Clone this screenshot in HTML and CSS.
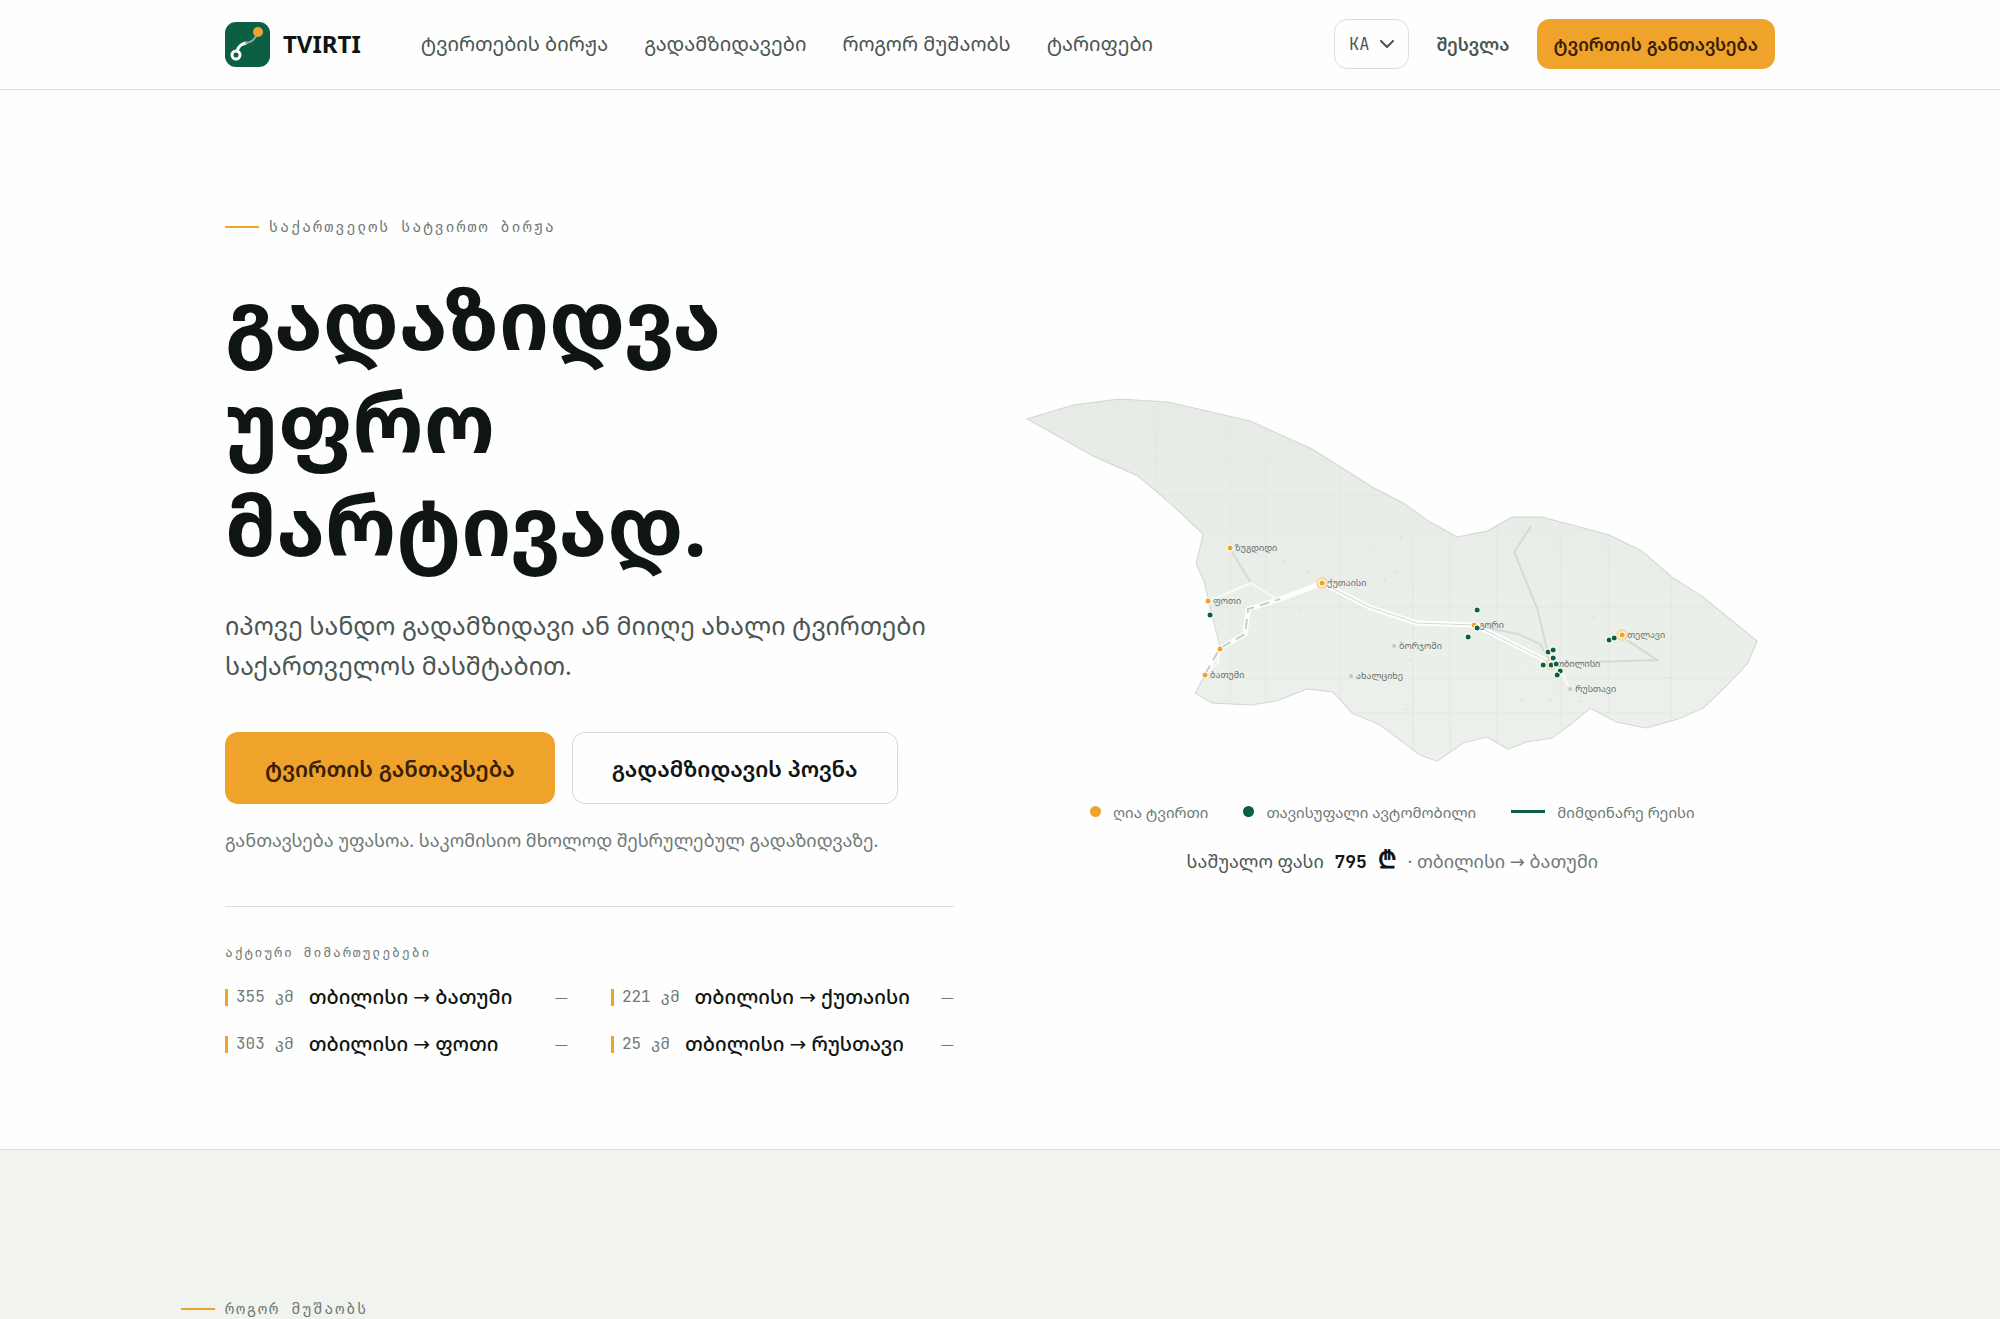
FILE: index.html
```html
<!DOCTYPE html>
<html lang="ka">
<head>
<meta charset="utf-8">
<meta name="viewport" content="width=device-width, initial-scale=1">
<title>TVIRTI</title>
<link rel="stylesheet" href="styles.css">
</head>
<body>
<header class="site-header">
  <div class="container header-row">
    <a class="brand" href="#">
      <svg class="brand-mark" viewBox="0 0 45 45" aria-hidden="true">
        <rect width="45" height="45" rx="11" fill="#0b5f43"/>
        <path d="M12 29C14 23 17 22 21 21" fill="none" stroke="#fff" stroke-width="3" stroke-linecap="round"/>
        <path d="M20 21C27 21 30 17 32 12" fill="none" stroke="#86ad9e" stroke-width="2"/>
        <circle cx="11" cy="33" r="4" fill="none" stroke="#fff" stroke-width="3"/>
        <circle cx="33" cy="10" r="5" fill="#efa32b"/>
      </svg>
      <span>TVIRTI</span>
    </a>
    <nav class="main-nav">
      <a href="#">ტვირთების ბირჟა</a>
      <a href="#">გადამზიდავები</a>
      <a href="#">როგორ მუშაობს</a>
      <a href="#">ტარიფები</a>
    </nav>
    <div class="header-actions">
      <button class="lang" type="button">KA
        <svg width="14" height="8" viewBox="0 0 14 8" aria-hidden="true"><path d="M1 1l6 6 6-6" fill="none" stroke="currentColor" stroke-width="2" stroke-linecap="round" stroke-linejoin="round"/></svg>
      </button>
      <a class="login" href="#">შესვლა</a>
      <button class="btn btn-primary btn-small" type="button">ტვირთის განთავსება</button>
    </div>
  </div>
</header>

<main>
  <section class="hero">
    <div class="container hero-grid">
      <div class="hero-copy">
        <p class="eyebrow">საქართველოს სატვირთო ბირჟა</p>
        <h1>გადაზიდვა<br>უფრო<br>მარტივად.</h1>
        <p class="lead">იპოვე სანდო გადამზიდავი ან მიიღე ახალი ტვირთები საქართველოს მასშტაბით.</p>
        <div class="cta">
          <button class="btn btn-primary" type="button">ტვირთის განთავსება</button>
          <button class="btn btn-outline" type="button">გადამზიდავის პოვნა</button>
        </div>
        <p class="note">განთავსება უფასოა. საკომისიო მხოლოდ შესრულებულ გადაზიდვაზე.</p>
        <div class="routes">
          <h2>აქტიური მიმართულებები</h2>
          <ul>
            <li><span class="km">355 კმ</span><a href="#">თბილისი → ბათუმი</a><span class="dash">—</span></li>
            <li><span class="km">221 კმ</span><a href="#">თბილისი → ქუთაისი</a><span class="dash">—</span></li>
            <li><span class="km">303 კმ</span><a href="#">თბილისი → ფოთი</a><span class="dash">—</span></li>
            <li><span class="km">25 კმ</span><a href="#">თბილისი → რუსთავი</a><span class="dash">—</span></li>
          </ul>
        </div>
      </div>

      <div class="hero-map">
        <svg class="map" viewBox="0 0 765 380" role="img" aria-label="საქართველო">
          <defs>
            <clipPath id="land"><path d="M17 29L63 15 109 9 158 12 240 31 302 59 362 97 393 113 420 132 447 147 477 141 502 127 532 127 599 145 632 161 662 187 693 207 747 251 737 274 715 297 693 318 668 329 636 338 606 332 580 318 561 334 542 348 516 352 498 359 477 347 453 353 427 371 410 365 370 335 342 323 323 302 297 299 266 311 241 315 202 313 185 303 210 257 200 217 194 191 186 174 193 144 160 113 128 86 83 66Z"/></clipPath>
            <linearGradient id="fade" x1="0" y1="0" x2="0" y2="1"><stop offset="0" stop-color="#e6ebe6"/><stop offset="1" stop-color="#ecf1ec"/></linearGradient>
          </defs>
          <g clip-path="url(#land)">
            <rect width="765" height="380" fill="url(#fade)"/>
            <path class="grid" d="M147 0V380M220 0V380M256 0V380M330 0V380M403 0V380M440 0V380M487 0V380M550 0V380M598 0V380M661 0V380M0 70H765M0 105H765M0 141H765M0 217H765M0 288H765M0 323H765"/>
          </g>
          <path class="border" d="M17 29L63 15 109 9 158 12 240 31 302 59 362 97 393 113 420 132 447 147 477 141 502 127 532 127 599 145 632 161 662 187 693 207 747 251 737 274 715 297 693 318 668 329 636 338 606 332 580 318 561 334 542 348 516 352 498 359 477 347 453 353 427 371 410 365 370 335 342 323 323 302 297 299 266 311 241 315 202 313 185 303 210 257 200 217 194 191 186 174 193 144 160 113 128 86 83 66Z"/>
          <g class="road-minor">
            <path d="M220 159L241 193 265 208M521 136L504 162 527 218 537 260M468 236L508 244 530 254 540 272M550 273L647 270 617 250"/>
          </g>
          <g class="road-pale"><path d="M199 211L241 193 265 208M209 261L208 273 195 284M550 277L558 296"/></g>
          <path class="road-case" d="M195 284L210 258 235 244 238 219 270 209 312 193 359 217 407 233 465 235 541 273"/>
          <path class="road-core" d="M312 193L359 217 407 233 465 235 541 273"/>
          <path class="road-dash" d="M195 284L210 258 235 244 238 219 270 209"/>
          <g class="specks"><circle cx="257" cy="163" r="1"/><circle cx="274" cy="172" r="1"/><circle cx="298" cy="182" r="1"/><circle cx="224" cy="186" r="1"/><circle cx="360" cy="156" r="1"/><circle cx="391" cy="147" r="1"/><circle cx="387" cy="182" r="1"/><circle cx="375" cy="190" r="1"/><circle cx="291" cy="220" r="1"/><circle cx="583" cy="228" r="1"/><circle cx="699" cy="258" r="1"/><circle cx="661" cy="288" r="1"/><circle cx="571" cy="311" r="1"/><circle cx="540" cy="310" r="1"/><circle cx="512" cy="310" r="1"/><circle cx="396" cy="319" r="1"/><circle cx="400" cy="270" r="1"/></g>
          <g class="halo"><circle cx="312" cy="193" r="6"/><circle cx="612" cy="245" r="6"/><circle cx="541" cy="274" r="6"/></g>
          <g class="town"><circle cx="384" cy="256" r="2"/><circle cx="341" cy="286" r="2"/><circle cx="560" cy="299" r="2"/></g>
          <g class="cargo"><circle cx="220" cy="158" r="3"/><circle cx="198" cy="211" r="3"/><circle cx="210" cy="259" r="3"/><circle cx="195" cy="285" r="3"/><circle cx="312" cy="193" r="3"/><circle cx="464" cy="235" r="3"/><circle cx="612" cy="245" r="3"/><circle cx="541" cy="274" r="3"/></g>
          <g class="city">
            <text x="225" y="161">ზუგდიდი</text><text x="203" y="214">ფოთი</text><text x="200" y="288">ბათუმი</text><text x="317" y="196">ქუთაისი</text><text x="389" y="259">ბორჯომი</text><text x="346" y="289">ახალციხე</text><text x="469" y="238">გორი</text><text x="546" y="277">თბილისი</text><text x="617" y="248">თელავი</text><text x="565" y="302">რუსთავი</text>
          </g>
          <g class="truck"><circle cx="200" cy="225" r="3"/><circle cx="467" cy="220" r="3"/><circle cx="467" cy="238" r="3"/><circle cx="458" cy="247" r="3"/><circle cx="538" cy="262" r="3"/><circle cx="543" cy="260" r="3"/><circle cx="543" cy="268" r="3"/><circle cx="533" cy="275" r="3"/><circle cx="541" cy="275" r="3"/><circle cx="546" cy="274" r="3"/><circle cx="550" cy="281" r="3"/><circle cx="547" cy="285" r="3"/><circle cx="599" cy="250" r="3"/><circle cx="604" cy="248" r="3"/></g>
        </svg>
        <ul class="legend">
          <li><i class="dot dot-cargo"></i>ღია ტვირთი</li>
          <li><i class="dot dot-truck"></i>თავისუფალი ავტომობილი</li>
          <li><i class="line"></i>მიმდინარე რეისი</li>
        </ul>
        <p class="price">საშუალო ფასი <strong>795 <b class="lari">₾</b></strong> <span>· თბილისი → ბათუმი</span></p>
      </div>
    </div>
  </section>

  <section class="how">
    <div class="container"><p class="eyebrow">როგორ მუშაობს</p></div>
  </section>
</main>
</body>
</html>
```
FILE: styles.css
```css
:root {
  --sans: "Noto Sans", "Noto Sans Georgian", "DejaVu Sans", sans-serif;
  --mono: "JetBrains Mono", "DejaVu Sans Mono", monospace;
  --ink: #0f1513;
  --body: #4a5652;
  --muted: #6f7975;
  --line: #dcdfdd;
  --green: #0b5f43;
  --amber: #efa32b;
}

* { box-sizing: border-box; }

body {
  margin: 0;
  background: #fefefe;
  color: var(--ink);
  font-family: var(--sans);
  font-size: 18px;
  overflow-x: hidden;
}

h1, h2, p, ul { margin: 0; padding: 0; }
ul { list-style: none; }
a { color: inherit; text-decoration: none; }
button { font: inherit; color: inherit; cursor: pointer; }

.container {
  width: 100%;
  max-width: 1598px;
  margin: 0 auto;
  padding: 0 24px;
}

.site-header { border-bottom: 1px solid var(--line); }
.header-row { display: flex; align-items: center; height: 89px; }

.brand { display: flex; align-items: center; gap: 13px; font-size: 24px; font-weight: 700; }
.brand-mark { width: 45px; height: 45px; }
.brand span { padding-bottom: 2px; }

.main-nav { display: flex; gap: 36px; margin-left: 60px; padding-bottom: 2px; color: var(--body); font-size: 20px; }

.header-actions { display: flex; align-items: center; gap: 27px; margin-left: auto; padding-bottom: 2px; }

.lang {
  display: flex;
  align-items: center;
  gap: 11px;
  height: 50px;
  padding: 0 14px;
  border: 1px solid var(--line);
  border-radius: 13px;
  background: none;
  color: var(--body);
  font-family: var(--mono);
  font-size: 17px;
}

.login { color: var(--body); font-size: 18px; font-weight: 600; }

.btn {
  height: 72px;
  padding: 0 39px;
  border: 1px solid transparent;
  border-radius: 13px;
  font-size: 22px;
  font-weight: 600;
  white-space: nowrap;
}
.btn-primary { background: var(--amber); color: #3a1f05; }
.btn-outline { background: none; border: 1px solid #d3d7d5; }
.btn-small { height: 50px; padding: 0 16px; font-size: 18px; }

.hero { padding: 127px 0 90px; }
.hero-grid { display: grid; grid-template-columns: 1fr 1.05fr; gap: 56px; align-items: center; }

.eyebrow {
  display: flex;
  align-items: center;
  gap: 10px;
  color: var(--muted);
  font-family: var(--mono);
  font-size: 15px;
  line-height: 20px;
  letter-spacing: 2px;
}
.eyebrow::before { content: ""; width: 34px; height: 2px; background: var(--amber); }

h1 { margin-top: 29px; font-size: 83px; font-weight: 700; line-height: 103px; }

.lead { margin-top: 30px; color: var(--body); font-size: 25px; line-height: 40px; }
.cta { display: flex; gap: 17px; margin-top: 47px; }
.note { margin-top: 22px; color: var(--muted); font-size: 18px; line-height: 28px; }

.routes { margin-top: 52px; padding-top: 36px; border-top: 1px solid var(--line); }
.routes h2 { color: var(--muted); font-family: var(--mono); font-size: 13px; font-weight: 400; line-height: 20px; letter-spacing: 2px; }
.routes ul { display: grid; grid-template-columns: 1fr 1fr; gap: 17px 43px; margin-top: 19px; }
.routes li { display: flex; align-items: center; line-height: 30px; font-size: 20px; }
.routes li::before { content: ""; width: 3px; height: 17px; margin-right: 8px; background: var(--amber); }
.routes a { margin-left: 15px; font-weight: 500; }
.km { color: var(--muted); font-family: var(--mono); font-size: 16px; }
.dash { margin-left: auto; color: var(--muted); font-size: 13px; }

.hero-map { display: flex; flex-direction: column; align-items: center; padding-bottom: 10px; }
.map { display: block; width: 100%; height: auto; }
.grid { stroke: #e1e7e2; stroke-width: 1; fill: none; }
.border { fill: none; stroke: #d2d6d3; stroke-width: 1; }
.road-minor { fill: none; stroke: #d6dad7; stroke-width: 2; }
.road-pale { fill: none; stroke: #fafbfa; stroke-width: 2; }
.road-case { fill: none; stroke: #fff; stroke-width: 5; stroke-linejoin: round; }
.road-core { fill: none; stroke: #d3d8d4; stroke-width: 1; }
.road-dash { fill: none; stroke: #c9cdca; stroke-width: 2; stroke-dasharray: 10 6; }
.specks { fill: #d9dedb; }
.halo { fill: #f8d9a0; }
.town { fill: #c3c9c5; }
.cargo { fill: var(--amber); stroke: #fff; stroke-width: 1; }
.truck { fill: var(--green); stroke: #fff; stroke-width: 1; }
.city { fill: #68726d; font-size: 9px; }

.legend { display: flex; gap: 35px; margin-top: 27px; color: var(--muted); font-size: 15px; line-height: 28px; }
.legend li { display: flex; align-items: center; gap: 12px; }
.dot { width: 11px; height: 11px; border-radius: 50%; }
.dot-cargo { background: var(--amber); }
.dot-truck { background: var(--green); }
.line { width: 34px; height: 3px; background: var(--green); }

.price { margin-top: 21px; color: var(--body); font-size: 18px; line-height: 28px; }
.price strong { margin: 0 6px; color: var(--ink); font-family: var(--mono); }
.lari { font-size: 24px; line-height: 24px; }
.price span { color: var(--muted); }

.how { min-height: 180px; padding: 149px 0 0; border-top: 1px solid var(--line); background: #f0f3ee; }
.how .eyebrow { margin-left: -44px; }
```
